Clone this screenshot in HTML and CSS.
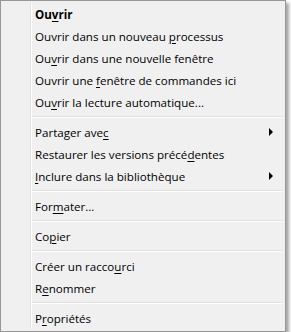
FILE: index.html
```html
<!DOCTYPE html>
<html lang="fr">
<head>
    <meta charset="UTF-8">
    <meta name="viewport" content="width=device-width, initial-scale=1.0">
    <title>Menu contextuel</title>
    <link rel="stylesheet" href="styles.css">
</head>
<body>

    <div class="menu">
        <ul class="menu-list">
            <li class="item bold"><span>Ou<u>v</u>rir</span></li>
            <li class="item"><span>Ouvrir dans un nouveau <u>p</u>rocessus</span></li>
            <li class="item"><span>Ou<u>v</u>rir dans une nouvelle fenêtre</span></li>
            <li class="item"><span>Ouvrir une <u>f</u>enêtre de commandes ici</span></li>
            <li class="item"><span>Ou<u>v</u>rir la lecture automatique...</span></li>
            <li class="sep"></li>
            <li class="item"><span>Partager ave<u>c</u></span><span class="arrow"></span></li>
            <li class="item"><span>Restaurer les versions précé<u>d</u>entes</span></li>
            <li class="item"><span><u>I</u>nclure dans la bibliothèque</span><span class="arrow"></span></li>
            <li class="sep"></li>
            <li class="item"><span>For<u>m</u>ater...</span></li>
            <li class="sep"></li>
            <li class="item"><span>Co<u>p</u>ier</span></li>
            <li class="sep"></li>
            <li class="item"><span>Créer un racco<u>u</u>rci</span></li>
            <li class="item"><span>R<u>e</u>nommer</span></li>
            <li class="sep"></li>
            <li class="item"><span>P<u>r</u>opriétés</span></li>
        </ul>
    </div>

</body>
</html>
```

FILE: styles.css
```css
body {
    margin: 0;
    font-family: "Open Sans", "Noto Sans", sans-serif;
    font-size: 11.6px;
    color: #000;
    background-color: #fff;
}

.menu {
    position: relative;
    width: 286px;
    height: 332px;
    box-sizing: border-box;
    background-color: #f0f0f0;
    border: 1px solid #979797;
    padding: 2px;
    box-shadow: 3px 3px 3px rgba(0, 0, 0, 0.35);
}

/* colonne des icônes */
.menu::before {
    content: "";
    position: absolute;
    top: 2px;
    bottom: 2px;
    left: 29px;
    width: 1px;
    background-color: #e2e3e3;
    border-right: 1px solid #fff;
}

.menu-list {
    list-style: none;
    margin: 0;
    padding: 0;
}

.item {
    display: flex;
    align-items: center;
    height: 22px;
    padding-left: 32px;
    padding-right: 10px;
    white-space: nowrap;
}

.item u {
    text-decoration-thickness: 1px;
    text-underline-offset: 2px;
}

.bold {
    font-weight: bold;
}

.arrow {
    margin-left: auto;
    width: 0;
    height: 0;
    border-left: 4px solid #000;
    border-top: 4px solid transparent;
    border-bottom: 4px solid transparent;
}

.sep {
    height: 8px;
    display: flex;
    flex-direction: column;
    justify-content: center;
    margin-left: 29px;
}

.sep::before {
    content: "";
    height: 1px;
    background-color: #e0e0e0;
    border-bottom: 1px solid #fff;
}
```
